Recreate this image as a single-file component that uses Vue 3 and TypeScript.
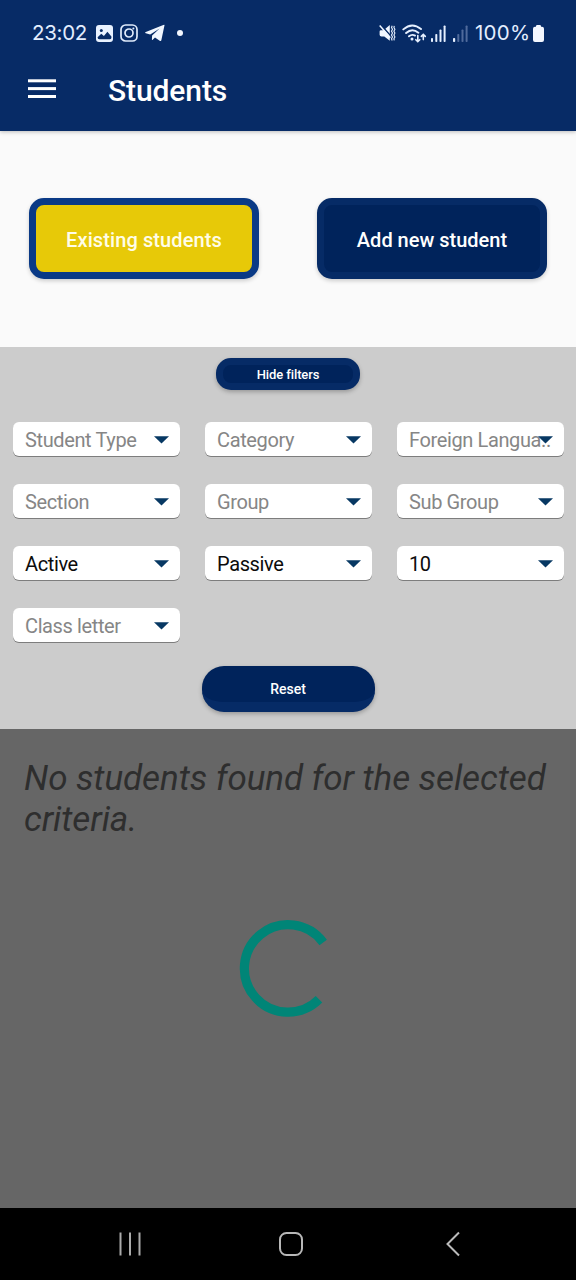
<script setup lang="ts">
interface Filter {
  label: string
  filled?: boolean
  clipped?: boolean
}

const filters: Filter[] = [
  { label: 'Student Type' },
  { label: 'Category' },
  { label: 'Foreign Langua..', clipped: true },
  { label: 'Section' },
  { label: 'Group' },
  { label: 'Sub Group' },
  { label: 'Active', filled: true },
  { label: 'Passive', filled: true },
  { label: '10', filled: true },
  { label: 'Class letter' },
]
</script>

<template>
  <div class="screen">
    <header class="top">
      <div class="status">
        <div class="status-left">
          <span class="clock">23:02</span>
          <svg class="i-img" width="17" height="17" viewBox="0 0 17 17">
            <rect width="17" height="17" rx="3" fill="#e9f2ff" />
            <circle cx="5.3" cy="5.4" r="1.5" fill="#072b66" />
            <path d="M1.6 12.2 5.3 8.8l2.6 2.3 3.5-4.3 4 4.6v1.4q0 1.4-1.4 1.4H3.2q-1.6 0-1.6-2z" fill="#072b66" />
          </svg>
          <svg class="i-insta" width="18" height="18" viewBox="0 0 18 18" fill="none" stroke="#e0ebfb" stroke-width="1.7">
            <rect x="1" y="1" width="16" height="16" rx="4.6" />
            <circle cx="9" cy="9" r="4" />
            <circle cx="13.4" cy="4.6" r="1" fill="#e0ebfb" stroke="none" />
          </svg>
          <svg class="i-tg" width="20" height="18" viewBox="0 0 20 18" fill="#f1f7ff">
            <path d="M19.500 1.200 16.400 16q-.3 1.600-1.700.8L10 13.600l-2.300 2.200q-.7.600-.8-.4l.2-3.800L14.600 4.600 5.200 10.400.8 9.300q-1.300-.5 0-1.200L18.300 1q1.300-.5 1.200.2z" />
          </svg>
          <i class="dot"></i>
        </div>
        <div class="status-right">
          <svg width="17" height="18" viewBox="0 0 17 18">
            <path d="M2 6.200h2.600L10.800 1v15.800L5.300 12.500H2.500Q.6 12.500.6 10.700V7.600Q.6 6.200 2 6.200z" fill="#f0f6ff" />
            <path d="M1.400.200 12.400 12.800" stroke="#072b66" stroke-width="1.500" />
            <path d="M.7 1.500 11.300 13.700" stroke="#f0f6ff" stroke-width="1.500" />
            <path d="m13.200 1.800-.7 1.600 1 1.900-1 1.900 1 1.900-1 1.900 1 1.900-1 1.900.7 1.600M15.300 1.800l-.4 1.600 1 1.900-1 1.900 1 1.900-1 1.900 1 1.900-1 1.900.4 1.600" fill="none" stroke="#e3edfc" stroke-width="1.150" />
          </svg>
          <svg class="i-wifi" width="25" height="19" viewBox="0 0 25 19" fill="none" stroke="#e6f0ff" stroke-width="1.900" stroke-linecap="round">
            <path d="M1.300 5.400Q10-2.400 19 5.100M4.100 9q6-5.500 12.300-.3M7 12.300q3-2.500 6-.7" />
            <circle cx="10" cy="14.900" r="1.500" fill="#e6f0ff" stroke="none" />
            <path d="M15.800 11.500v6m-2-1.800 2 2 2-2M21.300 15.600v-5.200m-2 2 2-2 2 2" stroke-width="1.600" />
          </svg>
          <svg class="i-sig" width="15" height="17" viewBox="0 0 15 17" fill="#e6f0ff">
            <rect y="13" width="2" height="4" rx=".8" /><rect x="4.300" y="9" width="2" height="8" rx=".8" />
            <rect x="8.500" y="4.500" width="2" height="12.500" rx=".8" /><rect x="12.600" y=".5" width="2" height="16.500" rx=".8" />
          </svg>
          <svg class="i-sig2" width="15" height="17" viewBox="0 0 15 17" fill="#506b9c">
            <rect y="13" width="2.200" height="4" rx=".8" fill="#e6f0ff" /><rect x="4.300" y="9" width="2" height="8" rx=".8" />
            <rect x="8.500" y="4.500" width="2" height="12.500" rx=".8" /><rect x="12.600" y=".5" width="2" height="16.500" rx=".8" />
          </svg>
          <span class="pct">100%</span>
          <svg class="i-bat" width="11" height="17" viewBox="0 0 11 17" fill="#f3f7ff">
            <path d="M3 1.800V1.200Q3 0 4.200 0h2.600Q8 0 8 1.200v.600h1Q11 1.800 11 3.800V15q0 2-2 2H2q-2 0-2-2V3.800q0-2 2-2z" />
          </svg>
        </div>
      </div>
      <div class="appbar">
        <svg width="28" height="20" viewBox="0 0 28 20" fill="#fff">
          <rect y=".3" width="28" height="3" /><rect y="8.100" width="28" height="3" /><rect y="16" width="28" height="3" />
        </svg>
        <h1>Students</h1>
      </div>
    </header>

    <section class="tabs">
      <button class="tab active"><span>Existing students</span></button>
      <button class="tab"><span>Add new student</span></button>
    </section>

    <section class="filters">
      <button class="pill hide"><span>Hide filters</span></button>
      <div class="grid">
        <div v-for="f in filters" :key="f.label" class="select" :class="{ filled: f.filled, clipped: f.clipped }">
          <span>{{ f.label }}</span>
          <svg width="15" height="8" viewBox="0 0 15 8"><path d="M0 .3h15L7.500 7.500z" fill="#073863" /></svg>
        </div>
      </div>
      <button class="pill reset"><span>Reset</span></button>
    </section>

    <main class="results">
      <p>No students found for the selected criteria.</p>
      <svg class="spinner" width="98" height="98" viewBox="0 0 98 98">
        <path d="M84.200 22.400A43.700 43.700 0 1 0 80 79.300" fill="none" stroke="#008577" stroke-width="9.200" />
      </svg>
    </main>

    <nav class="nav">
      <svg width="24" height="26" viewBox="0 0 24 26" stroke="#aaa" stroke-width="2"><path d="M2.500 1.500v23M12 1.500v23M21.500 1.500v23" /></svg>
      <svg class="home" width="26" height="26" viewBox="0 0 26 26" fill="none" stroke="#b8b8b8" stroke-width="2"><rect x="2" y="2" width="22" height="22" rx="6.500" /></svg>
      <svg class="back" width="16" height="26" viewBox="0 0 16 26" fill="none" stroke="#bbb" stroke-width="2"><path d="M14 1.500 2.500 13 14 24.500" /></svg>
    </nav>
  </div>
</template>

<style>
body {
  margin: 0;
}
</style>

<style scoped>
.screen {
  width: 576px;
  height: 1280px;
  display: flex;
  flex-direction: column;
  overflow: hidden;
  font-family: Roboto, "Liberation Sans", sans-serif;
  background: #fafafa;
}
.top {
  height: 131px;
  background: #072b66;
  box-shadow: 0 1px 4px rgba(0, 0, 0, 0.25);
  color: #fff;
}
.status {
  height: 66px;
  padding: 0 32px;
  display: flex;
  justify-content: space-between;
  align-items: center;
  font: 400 20.5px/24px Inter, sans-serif;
  color: #e3eeff;
}
.status-left,
.status-right {
  display: flex;
  align-items: center;
}
.clock {
  width: 56px;
  letter-spacing: -0.3px;
  white-space: nowrap;
}
.i-img {
  margin-left: 8px;
}
.i-insta {
  margin-left: 7px;
}
.i-tg {
  margin-left: 7px;
}
.dot {
  width: 6px;
  height: 6px;
  border-radius: 50%;
  background: #f2f7ff;
  margin-left: 12px;
}
.i-wifi {
  margin-left: 6px;
}
.i-sig {
  margin-left: 4px;
}
.i-sig2 {
  margin-left: 7px;
}
.pct {
  width: 54px;
  margin-left: 7px;
  letter-spacing: 0.25px;
  white-space: nowrap;
}
.i-bat {
  margin-left: 4px;
}
.appbar {
  height: 46px;
  padding-left: 28px;
  display: flex;
  align-items: center;
}
h1 {
  margin: 4px 0 0 52px;
  font-size: 30px;
  line-height: 36px;
  font-weight: 500;
  letter-spacing: -0.1px;
}
.tabs {
  height: 216px;
  padding: 0 29px 2px;
  box-sizing: border-box;
  display: flex;
  justify-content: space-between;
  align-items: center;
}
button {
  font-family: inherit;
  color: #fff;
  padding: 0;
  box-sizing: border-box;
  font-weight: 500;
}
.tab {
  width: 230px;
  height: 81px;
  border: 7px solid #062b66;
  border-radius: 15px;
  background: #00235b;
  font-size: 20px;
  box-shadow: 0 2px 4px rgba(0, 0, 0, 0.18);
}
.tab span {
  position: relative;
  top: 2px;
}
.tab.active {
  border-color: #0a3a86;
  background: #e7c908;
  color: #fffde8;
  letter-spacing: 0.1px;
}
.filters {
  height: 382px;
  background: #ccc;
  display: flex;
  flex-direction: column;
  align-items: center;
}
.pill {
  background: #00235b;
  box-shadow: 0 2px 4px rgba(0, 0, 0, 0.25);
}
.hide {
  width: 144px;
  height: 32px;
  margin-top: 11px;
  border: 7px solid #062b66;
  border-radius: 15px;
  font-size: 13px;
  line-height: 18px;
  letter-spacing: -0.1px;
}
.hide span {
  position: relative;
  top: 1px;
}
.reset {
  width: 173px;
  height: 46px;
  margin-top: 24px;
  border: 0 solid #062b66;
  border-bottom-width: 10px;
  border-radius: 22px;
  font-size: 14px;
  line-height: 36px;
}
.reset span {
  position: relative;
  top: 5px;
}
.grid {
  align-self: stretch;
  margin: 32px 12px 0 13px;
  display: grid;
  grid-template-columns: repeat(3, 167px);
  column-gap: 25px;
  row-gap: 28px;
}
.select {
  height: 34px;
  padding: 0 11px 0 12px;
  box-sizing: border-box;
  display: flex;
  align-items: center;
  justify-content: space-between;
  background: #fff;
  border-radius: 6px;
  box-shadow: 0 1px 0 #7d7d7d;
  font-size: 20px;
  letter-spacing: -0.38px;
  color: #868686;
}
.select span {
  position: relative;
  top: 1px;
  white-space: nowrap;
}
.select svg {
  flex: none;
  position: relative;
  top: 1px;
}
.select.filled {
  color: #0c0c0c;
}
.clipped span {
  width: 130px;
}
.clipped svg {
  margin-left: -16px;
}
.results {
  height: 479px;
  background: #666;
  display: flex;
  flex-direction: column;
  align-items: center;
}
.results p {
  margin: 29px 0 0 24px;
  width: 552px;
  font-size: 35px;
  line-height: 41px;
  font-style: italic;
  letter-spacing: -0.08px;
  color: #2e2e2e;
}
.spinner {
  margin-top: 80px;
}
.nav {
  height: 72px;
  background: #000;
  display: flex;
  align-items: center;
  padding-left: 118px;
}
.home {
  margin-left: 136px;
}
.back {
  margin-left: 141px;
}
</style>
